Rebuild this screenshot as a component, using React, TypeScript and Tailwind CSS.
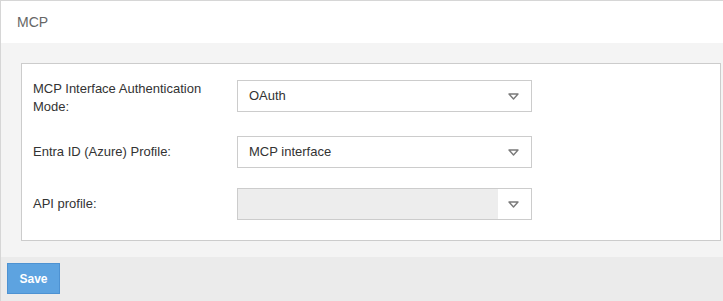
import React from 'react';

const font = { fontFamily: '"Liberation Sans", Arial, sans-serif' };

function Caret() {
  return (
    <svg width="11" height="7" viewBox="0 0 11 7" className="shrink-0">
      <path d="M1 1 H10 L5.5 6 Z" fill="none" stroke="#7a7a7a" strokeWidth="1.4" strokeLinejoin="round" />
    </svg>
  );
}

function SelectBox({ value, disabled }: { value?: string; disabled?: boolean }) {
  return (
    <div className="w-[295px] h-[32px] border border-[#cccccc] flex items-stretch bg-white">
      <div className={`flex-1 flex items-center pl-[11px] text-[13px] text-[#333333] ${disabled ? 'bg-[#ededed]' : ''}`}>
        {value}
      </div>
      <div className="w-[33px] flex items-center justify-center pr-[3px]">
        <Caret />
      </div>
    </div>
  );
}

export default function App() {
  const rows = [
    { label: 'MCP Interface Authentication Mode:', value: 'OAuth', top: true },
    { label: 'Entra ID (Azure) Profile:', value: 'MCP interface' },
    { label: 'API profile:', value: '', disabled: true },
  ];

  return (
    <div className="w-[723px] h-[301px] overflow-hidden bg-white" style={font}>
      <div className="border-t border-l border-[#d6d6d6] flex flex-col">
        {/* header */}
        <div className="h-[42px] bg-white flex items-center pl-[16px] text-[14px] text-[#666666]">MCP</div>

        {/* body */}
        <div className="bg-[#f4f4f4] pl-[20px] pt-[20px] pb-[16px]">
          <div className="w-[700px] bg-white border border-[#cccccc] pt-[16px] pb-[20px] pl-[11px] flex flex-col gap-[20px]">
            {rows.map((r) => (
              <div key={r.label} className={`flex gap-[12px] ${r.top ? 'items-start' : 'items-center'}`}>
                <div className="w-[192px] text-[13px] leading-[18px] text-[#333333]">{r.label}</div>
                <SelectBox value={r.value} disabled={r.disabled} />
              </div>
            ))}
          </div>
        </div>

        {/* footer */}
        <div className="bg-[#ebebeb] h-[44px] pl-[6px] pt-[6px]">
          <button className="w-[53px] h-[31px] bg-[#5da3e0] border border-[#4d92d2] text-white text-[12px] font-bold">
            Save
          </button>
        </div>
      </div>
    </div>
  );
}
